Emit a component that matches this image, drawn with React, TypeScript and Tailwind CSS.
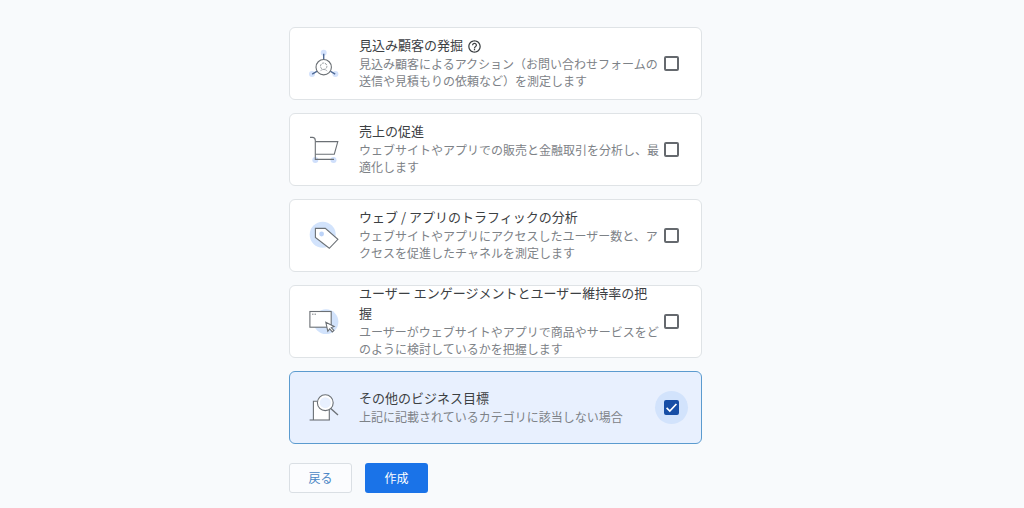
import { useState, type ReactNode } from 'react'
import { MdHelpOutline } from 'react-icons/md'

function LeadsIcon() {
  return (
    <>
      <g fill="#d5e3fc" stroke="none">
        <circle cx="15.7" cy="4.7" r="3" />
        <circle cx="4" cy="26" r="3" />
        <circle cx="27.4" cy="26" r="3" />
      </g>
      <path d="M15.7 11.6V5.8M9.2 23.2 4.2 26.2M22.2 23.2 27.2 26.2" stroke="#4f6a96" strokeWidth="1.4" />
      <circle cx="15.7" cy="19.2" r="7.7" fill="#fff" />
      <circle cx="15.7" cy="18.2" r="3.2" stroke="#80868b" strokeWidth="0.8" strokeDasharray="2.4 0.8" />
      <path d="M12.2 23.2c.8-1.2 2-1.7 3.5-1.7s2.7.5 3.5 1.7" stroke="#9aa0a6" strokeWidth="0.8" />
    </>
  )
}

function CartIcon() {
  return (
    <>
      <circle cx="7.3" cy="26" r="3" fill="#cfdffb" stroke="none" />
      <circle cx="25.5" cy="26" r="3" fill="#cfdffb" stroke="none" />
      <path d="M2 3.4h2.3c2 0 3 1 3 3v19H26" />
      <path d="M7.5 7.6H29.8L26.3 20.2H7.5" />
    </>
  )
}

function TagIcon() {
  return (
    <>
      <circle cx="14.7" cy="14.7" r="13" fill="#d2e3fc" stroke="none" />
      <path d="M7.4 8.4H17.3L29.9 19.4 21.3 28.3 7.4 17.4Z" fill="#fff" />
      <circle cx="13.6" cy="14" r="2.4" fill="#bcd3f8" stroke="none" />
    </>
  )
}

function WindowIcon() {
  return (
    <>
      <circle cx="18" cy="15.7" r="12.4" fill="#d2e3fc" stroke="none" />
      <rect x="1.9" y="5.5" width="21.3" height="15.7" fill="#fff" />
      <path d="M4 8.2H8" strokeWidth="0.9" strokeDasharray="1 0.5" />
      <path d="M17.8 16.2 19.8 25.3 21.7 22.9 24.3 25.9 25.9 24.5 23.3 21.6 26.2 20.4Z" fill="#fff" />
    </>
  )
}

function SearchPageIcon() {
  return (
    <>
      <path d="M5.4 28V9.2H21.3V28" fill="#fff" />
      <path d="M1.6 28H21.9" />
      <circle cx="17.3" cy="10.7" r="7.9" fill="#fff" />
      <circle cx="17.3" cy="10.7" r="5.5" fill="#e8f0fe" stroke="none" />
      <path d="M22.7 16.5 30 23" strokeWidth="1.4" />
    </>
  )
}

type Goal = {
  id: string
  title: string
  desc: string
  icon: ReactNode
  help?: boolean
}

const goals: Goal[] = [
  {
    id: 'leads',
    title: '見込み顧客の発掘',
    desc: '見込み顧客によるアクション（お問い合わせフォームの送信や見積もりの依頼など）を測定します',
    icon: <LeadsIcon />,
    help: true,
  },
  {
    id: 'sales',
    title: '売上の促進',
    desc: 'ウェブサイトやアプリでの販売と金融取引を分析し、最適化します',
    icon: <CartIcon />,
  },
  {
    id: 'traffic',
    title: 'ウェブ / アプリのトラフィックの分析',
    desc: 'ウェブサイトやアプリにアクセスしたユーザー数と、アクセスを促進したチャネルを測定します',
    icon: <TagIcon />,
  },
  {
    id: 'engagement',
    title: 'ユーザー エンゲージメントとユーザー維持率の把握',
    desc: 'ユーザーがウェブサイトやアプリで商品やサービスをどのように検討しているかを把握します',
    icon: <WindowIcon />,
  },
  {
    id: 'other',
    title: 'その他のビジネス目標',
    desc: '上記に記載されているカテゴリに該当しない場合',
    icon: <SearchPageIcon />,
  },
]

function GoalCard({ goal, checked, onToggle }: { goal: Goal; checked: boolean; onToggle: () => void }) {
  return (
    <li
      className={`flex min-h-[73px] items-center rounded-md border pl-[18px] pr-[22px] ${
        checked ? 'border-[#5b9bcf] bg-[#e8f0fe]' : 'border-[#dfe3e6] bg-white'
      }`}
    >
      <svg
        viewBox="0 0 31 31"
        className="mr-5 h-[31px] w-[31px] shrink-0"
        fill="none"
        stroke="#6b7075"
        strokeWidth="1.1"
        aria-hidden="true"
      >
        {goal.icon}
      </svg>

      {/* the negative margin lets a two-line title use the full card height */}
      <div className="-my-[3px] min-w-0 flex-1 pb-[3px]">
        <div className="text-[13px] leading-5 text-[#3c4043]">
          <label htmlFor={goal.id}>{goal.title}</label>
          {goal.help && (
            <button type="button" aria-label="ヘルプ" className="ml-1 inline-block align-middle">
              <MdHelpOutline className="h-[15px] w-[15px]" />
            </button>
          )}
        </div>
        <p id={`${goal.id}-desc`} className="text-xs leading-[17px] text-[#7d8287]">
          {goal.desc}
        </p>
      </div>

      <div className="relative ml-1 flex h-[15px] w-[15px] shrink-0 items-center justify-center">
        {checked && <span className="absolute -inset-[9px] rounded-full bg-[#d2e3fc]" />}
        <input
          id={goal.id}
          type="checkbox"
          checked={checked}
          onChange={onToggle}
          aria-describedby={`${goal.id}-desc`}
          className="relative h-[15px] w-[15px] appearance-none rounded-[2px] border-2 border-[#65696e] checked:border-[#174ea6] checked:bg-[#174ea6]"
        />
        {checked && (
          <svg viewBox="0 0 15 15" className="pointer-events-none absolute inset-0" fill="none" aria-hidden="true">
            <path d="M2.6 7.9 5.8 11 12.4 4" stroke="#fff" strokeWidth="1.7" />
          </svg>
        )}
      </div>
    </li>
  )
}

export default function App() {
  const [selected, setSelected] = useState<string[]>(['other'])

  const toggle = (id: string) =>
    setSelected((prev) => (prev.includes(id) ? prev.filter((s) => s !== id) : [...prev, id]))

  return (
    <main
      lang="ja"
      className="min-h-screen bg-[#f8fafc] pt-[27px] pr-[33px] pb-[15px] font-['Noto_Sans_CJK_JP',sans-serif]"
    >
      <form className="mx-auto max-w-[413px]" onSubmit={(e) => e.preventDefault()}>
        <ul className="flex flex-col gap-[13px]">
          {goals.map((goal) => (
            <GoalCard
              key={goal.id}
              goal={goal}
              checked={selected.includes(goal.id)}
              onToggle={() => toggle(goal.id)}
            />
          ))}
        </ul>

        <div className="mt-[19px] flex gap-[13px]">
          <button
            type="button"
            className="h-[30px] min-w-[63px] rounded-[3px] border border-[#dadfe4] bg-[#fbfcfe] text-xs text-[#4a86c5]"
          >
            戻る
          </button>
          <button type="submit" className="h-[30px] min-w-[63px] rounded-[3px] bg-[#1a73e8] text-xs text-white">
            作成
          </button>
        </div>
      </form>
    </main>
  )
}
